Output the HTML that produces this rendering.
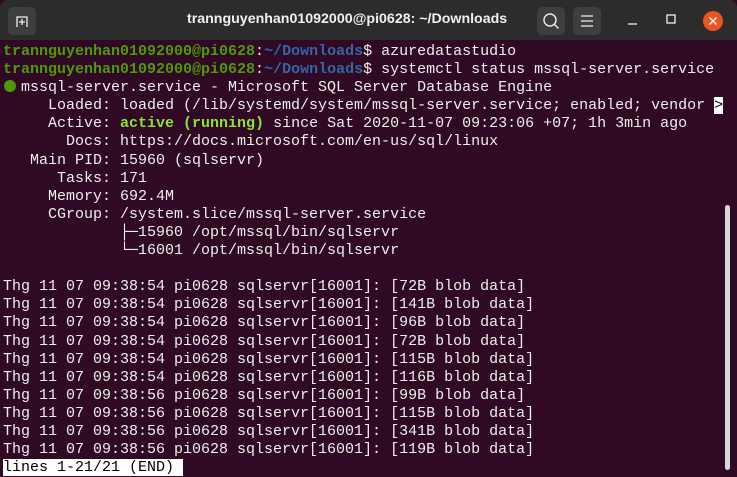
<!DOCTYPE html>
<html><head><style>
html,body{margin:0;padding:0;width:737px;height:477px;overflow:hidden;background:#300a24;}
.tb{position:absolute;left:0;top:0;width:737px;height:40px;background:#2c2c2c;border-radius:8px 8px 0 0;}
.title{position:absolute;left:187px;top:11px;color:#f0f0f0;font:bold 14.2px "Liberation Sans",sans-serif;white-space:nowrap;}
.btn{position:absolute;top:7px;width:28px;height:28px;background:#3e3e3e;border-radius:5px;}
.term{position:absolute;left:3px;top:43px;font:15px/18.1px "Liberation Mono",monospace;color:#eeeeec;white-space:pre;}
.g{color:#4e9a06;font-weight:bold}.b{color:#3465a4;font-weight:bold}.ag{color:#8ae234;font-weight:bold}
.dot{display:inline-block;width:12px;height:12px;border-radius:50%;background:#4e9a06;vertical-align:-1px;margin:0 5px 0 1px}
.rv{background:#fff;color:#000}
.sb{position:absolute;left:725px;top:205px;width:5px;height:265px;background:#d8d8d8;border-radius:3px;}
</style></head><body>
<div class="tb">
<div class="btn" style="left:8px;"><svg width="28" height="28"><path d="M9 20V10h10v10M11 15h6M14 12v6" stroke="#eee" stroke-width="1.3" fill="none"/></svg></div>
<div class="title">trannguyenhan01092000@pi0628: ~/Downloads</div>
<div class="btn" style="left:537px;"><svg width="28" height="28"><circle cx="13" cy="13" r="6" stroke="#eee" stroke-width="1.4" fill="none"/><path d="M17.5 17.5l4 4" stroke="#eee" stroke-width="1.4"/></svg></div>
<div class="btn" style="left:573px;"><svg width="28" height="28"><path d="M8 9h12M8 14h12M8 19h12" stroke="#eee" stroke-width="1.3"/></svg></div>
<svg style="position:absolute;left:626px;top:14px" width="14" height="14"><path d="M2 10h9" stroke="#eee" stroke-width="1.3"/></svg>
<svg style="position:absolute;left:665px;top:13px" width="14" height="14"><rect x="2" y="2" width="8" height="8" stroke="#eee" stroke-width="1.3" fill="none"/></svg>
<svg style="position:absolute;left:702px;top:10px" width="22" height="22"><circle cx="11" cy="11" r="10" fill="#e95420"/><path d="M7.5 7.5l7 7M14.5 7.5l-7 7" stroke="#fff" stroke-width="1.4"/></svg>
</div>
<div class="term"><span class="g">trannguyenhan01092000@pi0628</span>:<span class="b">~/Downloads</span>$ azuredatastudio
<span class="g">trannguyenhan01092000@pi0628</span>:<span class="b">~/Downloads</span>$ systemctl status mssql-server.service
<span class="dot"></span>mssql-server.service - Microsoft SQL Server Database Engine
     Loaded: loaded (/lib/systemd/system/mssql-server.service; enabled; vendor <span class="rv">&gt;</span>
     Active: <span class="ag">active (running)</span> since Sat 2020-11-07 09:23:06 +07; 1h 3min ago
       Docs: https://docs.microsoft.com/en-us/sql/linux
   Main PID: 15960 (sqlservr)
      Tasks: 171
     Memory: 692.4M
     CGroup: /system.slice/mssql-server.service
             ├─15960 /opt/mssql/bin/sqlservr
             └─16001 /opt/mssql/bin/sqlservr

Thg 11 07 09:38:54 pi0628 sqlservr[16001]: [72B blob data]
Thg 11 07 09:38:54 pi0628 sqlservr[16001]: [141B blob data]
Thg 11 07 09:38:54 pi0628 sqlservr[16001]: [96B blob data]
Thg 11 07 09:38:54 pi0628 sqlservr[16001]: [72B blob data]
Thg 11 07 09:38:54 pi0628 sqlservr[16001]: [115B blob data]
Thg 11 07 09:38:54 pi0628 sqlservr[16001]: [116B blob data]
Thg 11 07 09:38:56 pi0628 sqlservr[16001]: [99B blob data]
Thg 11 07 09:38:56 pi0628 sqlservr[16001]: [115B blob data]
Thg 11 07 09:38:56 pi0628 sqlservr[16001]: [341B blob data]
Thg 11 07 09:38:56 pi0628 sqlservr[16001]: [119B blob data]
<span class="rv">lines 1-21/21 (END) </span></div>
<div class="sb"></div>
</body></html>
